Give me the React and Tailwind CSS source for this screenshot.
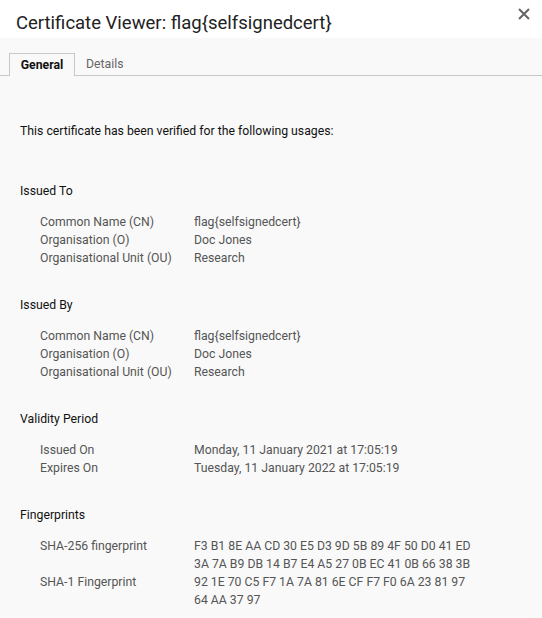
const sections = [
  {
    title: 'Issued To',
    rows: [
      ['Common Name (CN)', ['flag{selfsignedcert}']],
      ['Organisation (O)', ['Doc Jones']],
      ['Organisational Unit (OU)', ['Research']],
    ],
  },
  {
    title: 'Issued By',
    rows: [
      ['Common Name (CN)', ['flag{selfsignedcert}']],
      ['Organisation (O)', ['Doc Jones']],
      ['Organisational Unit (OU)', ['Research']],
    ],
  },
  {
    title: 'Validity Period',
    rows: [
      ['Issued On', ['Monday, 11 January 2021 at 17:05:19']],
      ['Expires On', ['Tuesday, 11 January 2022 at 17:05:19']],
    ],
  },
  {
    title: 'Fingerprints',
    rows: [
      ['SHA-256 fingerprint', ['F3 B1 8E AA CD 30 E5 D3 9D 5B 89 4F 50 D0 41 ED', '3A 7A B9 DB 14 B7 E4 A5 27 0B EC 41 0B 66 38 3B']],
      ['SHA-1 Fingerprint', ['92 1E 70 C5 F7 1A 7A 81 6E CF F7 F0 6A 23 81 97', '64 AA 37 97']],
    ],
  },
];

function Section({ title, rows }) {
  return (
    <div className="mt-[29px] first:mt-0">
      <div className="leading-[18px] text-[#111]">{title}</div>
      <div className="mt-[13px] pl-5">
        {rows.map(([label, lines]) => (
          <div key={label} className="flex leading-[18px] text-[#555]">
            <div className="w-[154px] shrink-0">{label}</div>
            <div className="whitespace-nowrap">
              {lines.map((l) => (
                <div key={l}>{l}</div>
              ))}
            </div>
          </div>
        ))}
      </div>
    </div>
  );
}

export default function App() {
  return (
    <div className="relative w-[542px] h-[618px] overflow-hidden bg-[#f9f9f9] text-[12.25px]" style={{ fontFamily: 'Roboto, "Noto Sans", sans-serif' }}>
      <div className="h-[38px] bg-white pl-[16px] pt-[10px]">
        <h1 className="text-[18.5px] leading-[26px] text-[#222]">Certificate Viewer: flag{'{'}selfsignedcert{'}'}</h1>
      </div>
      <button className="absolute right-[11px] top-[7px] text-[#666]">
        <svg width="14" height="14" viewBox="0 0 14 14">
          <path d="M2 2 L12 12 M12 2 L2 12" stroke="currentColor" strokeWidth="2" />
        </svg>
      </button>

      <div className="pt-[15px]">
        <div className="flex border-b border-[#c8c8c8] pl-[9px] h-[23px]">
          <div className="h-[23px] w-[66px] border border-b-0 border-[#c8c8c8] bg-[#f9f9f9] -mb-px flex items-center justify-center font-bold text-[#111]">General</div>
          <div className="h-[22px] px-[11px] flex items-center text-[#666]">Details</div>
        </div>

        <div className="pl-5 pt-[46px]">
          <div className="leading-[18px] text-[#111]">This certificate has been verified for the following usages:</div>
          <div className="mt-[42px]">
            {sections.map((s) => (
              <Section key={s.title} {...s} />
            ))}
          </div>
        </div>
      </div>
    </div>
  );
}
